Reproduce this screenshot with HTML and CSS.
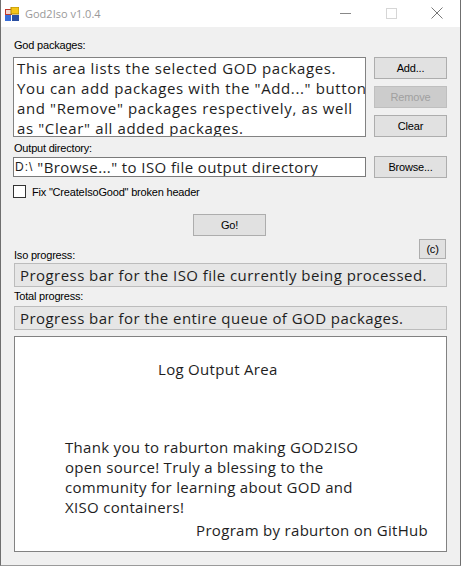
FILE: index.html
```html
<!DOCTYPE html>
<html>
<head>
<meta charset="utf-8">
<title>God2Iso v1.0.4</title>
<link rel="stylesheet" href="styles.css">
</head>
<body>
<div class="window">
  <div class="titlebar">
    <svg class="app-icon" width="14" height="14" viewBox="0 0 14 14">
      <rect x="0.5" y="2.5" width="6" height="5" fill="#f2d7d0" stroke="#c0392b"/>
      <rect x="6" y="0" width="8" height="7" fill="#f5c518" stroke="#b08a00" stroke-width="1"/>
      <rect x="0" y="8" width="6" height="6" fill="#3a6fd8"/>
      <rect x="7" y="8" width="7" height="6" fill="#2a4fa0"/>
    </svg>
    <span class="title">God2Iso v1.0.4</span>
    <div class="caption-buttons">
      <svg class="cap min" width="46" height="26" viewBox="0 0 46 26"><line x1="18" y1="13.5" x2="29" y2="13.5" stroke="#888" stroke-width="1"/></svg>
      <svg class="cap max" width="46" height="26" viewBox="0 0 46 26"><rect x="18.5" y="8.5" width="10" height="10" fill="none" stroke="#d6d6d6" stroke-width="1"/></svg>
      <svg class="cap close" width="46" height="26" viewBox="0 0 46 26"><path d="M17.5 7.5 L28.5 18.5 M28.5 7.5 L17.5 18.5" stroke="#777" stroke-width="1"/></svg>
    </div>
  </div>
  <div class="client">
    <div class="lbl lbl-first">God packages:</div>
    <div class="row-packages">
      <div class="listbox">
        <div class="item">This area lists the selected GOD packages.</div>
        <div class="item">You can add packages with the "Add..." button</div>
        <div class="item">and "Remove" packages respectively, as well</div>
        <div class="item">as "Clear" all added packages.</div>
      </div>
      <div class="btn-col">
        <button class="btn">Add...</button>
        <button class="btn" disabled>Remove</button>
        <button class="btn">Clear</button>
      </div>
    </div>
    <div class="lbl lbl-output">Output directory:</div>
    <div class="row-output">
      <div class="textbox"><span class="small">D:\</span><span class="big">"Browse..." to ISO file output directory</span></div>
      <button class="btn">Browse...</button>
    </div>
    <label class="check-row">
      <span class="checkbox"></span>
      <span class="check-label">Fix "CreateIsoGood" broken header</span>
    </label>
    <div class="go-row">
      <button class="btn">Go!</button>
    </div>
    <div class="iso-row">
      <div class="lbl">Iso progress:</div>
      <button class="btn btn-c">(c)</button>
    </div>
    <div class="progress">Progress bar for the ISO file currently being processed.</div>
    <div class="lbl lbl-total">Total progress:</div>
    <div class="progress progress-total">Progress bar for the entire queue of GOD packages.</div>
    <div class="log">
      <div class="log-title">Log Output Area</div>
      <div class="log-thanks">Thank you to raburton making GOD2ISO open source! Truly a blessing to the community for learning about GOD and XISO containers!</div>
      <div class="log-credit">Program by raburton on GitHub</div>
    </div>
  </div>
</div>
</body>
</html>
```
FILE: styles.css
```css
* { box-sizing: border-box; }
html, body { margin: 0; padding: 0; background: #f0f0f0; }
body { width: 461px; height: 566px; overflow: hidden; }

.window {
  width: 461px;
  height: 566px;
  background: #f0f0f0;
  border-left: 1px solid #6f6f6f;
  border-right: 1px solid #6f6f6f;
  border-bottom: 1px solid #9a9a9a;
  display: flex;
  flex-direction: column;
}

.titlebar {
  height: 27px;
  background: #ffffff;
  display: flex;
  align-items: center;
  flex: none;
}
.app-icon { margin-left: 4px; margin-top: 1px; flex: none; }
.title {
  margin-left: 6px;
  font-family: "Open Sans", "Noto Sans", sans-serif;
  font-size: 11px;
  color: #999999;
  flex: 1;
}
.caption-buttons { display: flex; align-self: flex-start; }
.cap { display: block; }

.client {
  flex: 1;
  padding: 12px 13px 0 12px;
  font-family: "Liberation Sans", Arial, sans-serif;
  font-size: 11px;
  letter-spacing: -0.2px;
  color: #000;
}

.lbl { height: 13px; line-height: 13px; white-space: nowrap; }
.lbl-first { margin-bottom: 5px; margin-left: 1px; }

.row-packages { display: flex; gap: 8px; height: 80px; }
.listbox {
  width: 353px;
  height: 80px;
  background: #fff;
  border: 1px solid #828282;
  padding: 0 0 0 3px;
  font-family: "Open Sans", "Noto Sans", sans-serif;
  font-size: 15px;
  letter-spacing: 0.62px;
  line-height: 20px;
  color: #1e1e1e;
  overflow: hidden;
}
.item { height: 20px; white-space: nowrap; }
.btn-col { display: flex; flex-direction: column; gap: 7px; }

.btn {
  width: 73px;
  height: 22px;
  background: #e1e1e1;
  border: 1px solid #adadad;
  font-family: "Liberation Sans", Arial, sans-serif;
  font-size: 11px;
  letter-spacing: -0.2px;
  color: #000;
  padding: 0;
  margin: 0;
}
.btn:disabled {
  background: #cccccc;
  border-color: #bfbfbf;
  color: #a0a0a0;
}

.lbl-output { margin-top: 5px; margin-bottom: 1px; margin-left: 1px; }
.row-output { display: flex; gap: 8px; align-items: center; height: 22px; }
.textbox {
  width: 353px;
  height: 20px;
  background: #fff;
  border: 1px solid #7a7a7a;
  padding: 0 0 0 1px;
  white-space: nowrap;
  overflow: hidden;
  display: flex;
  align-items: center;
  color: #1e1e1e;
}
.small { font-family: "Liberation Sans", Arial, sans-serif; font-size: 12px; line-height: 18px; letter-spacing: 1px; margin-right: 4px; }
.big { font-family: "Open Sans", "Noto Sans", sans-serif; font-size: 15px; line-height: 18px; letter-spacing: 0.4px; }

.check-row { display: flex; align-items: center; margin-top: 7px; height: 13px; }
.checkbox {
  width: 13px;
  height: 13px;
  border: 1px solid #333;
  background: #fff;
  flex: none;
}
.check-label { margin-left: 6px; }

.go-row { display: flex; justify-content: center; margin-top: 16px; padding-right: 1px; }

.iso-row {
  display: flex;
  justify-content: space-between;
  align-items: flex-end;
  height: 23px;
  margin-top: 3px;
}
.iso-row .lbl { margin-left: 1px; }
.btn-c { width: 27px; height: 20px; align-self: flex-start; margin-right: 1px; }

.progress {
  margin-top: 1px;
  height: 24px;
  background: #e6e6e6;
  border: 1px solid #bcbcbc;
  font-family: "Open Sans", "Noto Sans", sans-serif;
  font-size: 15px;
  letter-spacing: 0.45px;
  line-height: 22px;
  padding-left: 5px;
  color: #1e1e1e;
  white-space: nowrap;
  overflow: hidden;
  margin-left: 1px;
}
.lbl-total { margin-top: 3px; margin-left: 1px; }
.progress-total { margin-top: 3px; }

.log {
  margin-top: 6px;
  height: 216px;
  background: #fff;
  border: 1px solid #828282;
  font-family: "Open Sans", "Noto Sans", sans-serif;
  font-size: 15px;
  letter-spacing: 0.3px;
  line-height: 20px;
  color: #1e1e1e;
  display: flex;
  flex-direction: column;
  margin-left: 1px;
}
.log-title { margin-top: 22px; margin-left: 143px; }
.log-thanks { margin-top: 58px; margin-left: 50px; width: 312px; }
.log-credit { margin-top: 3px; align-self: flex-end; margin-right: 18px; }
```
